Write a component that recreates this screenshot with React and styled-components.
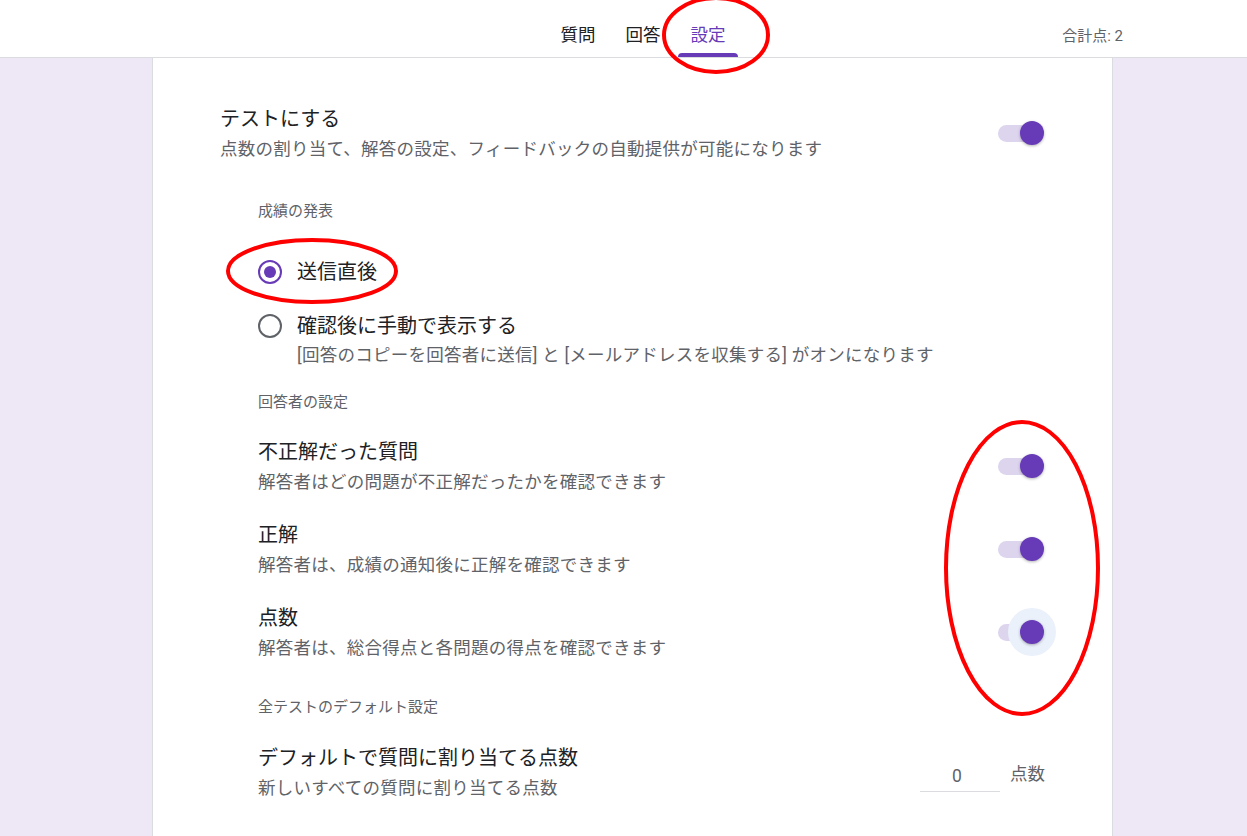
import React from "react";
import styled, { createGlobalStyle } from "styled-components";

const GlobalStyle = createGlobalStyle`
  html, body {
    margin: 0;
    padding: 0;
    overflow: hidden;
  }
  body {
    font-family: Roboto, "Noto Sans CJK JP", "Noto Sans", sans-serif;
    color: #202124;
    background: #ede7f6;
  }
`;

const tabs = [
    {name: '質問'},
    {name: '回答'},
    {name: '設定', active: true},
]

const responderRows = [
    {title: '不正解だった質問', desc: '解答者はどの問題が不正解だったかを確認できます'},
    {title: '正解', desc: '解答者は、成績の通知後に正解を確認できます'},
    {title: '点数', desc: '解答者は、総合得点と各問題の得点を確認できます', focused: true},
]

const Toggle = ({focused}) => (
    <ToggleWrap>
        {focused && <ToggleHalo/>}
        <ToggleTrack/>
        <ToggleThumb/>
    </ToggleWrap>
)

const App = () => {
    return (
        <Page>
            <GlobalStyle/>
            <Header>
                <span/>
                <Tabs>
                    {tabs.map(t => (
                        <Tab key={t.name} $active={t.active}>{t.name}</Tab>
                    ))}
                </Tabs>
                <Total>合計点: 2</Total>
            </Header>
            <Body>
                <Card>
                    <SettingRow>
                        <SettingText>
                            <SettingTitle>テストにする</SettingTitle>
                            <SettingDesc>点数の割り当て、解答の設定、フィードバックの自動提供が可能になります</SettingDesc>
                        </SettingText>
                        <Toggle/>
                    </SettingRow>

                    <Section>
                        <SectionLabel $top={40}>成績の発表</SectionLabel>
                        <RadioGroup>
                            <RadioOption>
                                <RadioBox><RadioCircle $checked/></RadioBox>
                                <div>
                                    <SettingTitle>送信直後</SettingTitle>
                                </div>
                            </RadioOption>
                            <RadioOption>
                                <RadioBox><RadioCircle/></RadioBox>
                                <div>
                                    <SettingTitle>確認後に手動で表示する</SettingTitle>
                                    <RadioHint>[回答のコピーを回答者に送信] と [メールアドレスを収集する] がオンになります</RadioHint>
                                </div>
                            </RadioOption>
                        </RadioGroup>

                        <SectionLabel $top={25}>回答者の設定</SectionLabel>
                        {responderRows.map((r, i) => (
                            <SettingRow key={r.title} $gap={i === 0 ? 26 : 27}>
                                <SettingText>
                                    <SettingTitle>{r.title}</SettingTitle>
                                    <SettingDesc>{r.desc}</SettingDesc>
                                </SettingText>
                                <Toggle focused={r.focused}/>
                            </SettingRow>
                        ))}

                        <SectionLabel $top={37}>全テストのデフォルト設定</SectionLabel>
                        <SettingRow $gap={27}>
                            <SettingText>
                                <SettingTitle>デフォルトで質問に割り当てる点数</SettingTitle>
                                <SettingDesc>新しいすべての質問に割り当てる点数</SettingDesc>
                            </SettingText>
                            <PointsField>
                                <PointsInput>0</PointsInput>
                                <PointsUnit>点数</PointsUnit>
                            </PointsField>
                        </SettingRow>
                    </Section>
                </Card>
            </Body>

            <Annotations width="1247" height="836" viewBox="0 0 1247 836">
                <ellipse cx="716" cy="35" rx="52" ry="37" />
                <ellipse cx="312" cy="271" rx="84" ry="31" />
                <ellipse cx="1022" cy="568" rx="76" ry="146" />
            </Annotations>
        </Page>
    )
}

const Page = styled.div`
  position: relative;
  height: 836px;
  overflow: hidden;
`;

const Header = styled.header`
  display: grid;
  grid-template-columns: 548px auto 1fr;
  align-items: stretch;
  height: 57px;
  background: #ffffff;
  border-bottom: 1px solid #dadce0;
  padding-right: 124px;
`;

const Tabs = styled.nav`
  display: flex;
  gap: 5px;
`;

const Tab = styled.div`
  position: relative;
  display: flex;
  align-items: center;
  padding: 0 12px 8px;
  margin-top: 18px;
  width: 36px;
  justify-content: center;
  font-size: 17.5px;
  color: ${p => p.$active ? '#673ab7' : '#202124'};

  &::after {
    content: '';
    display: ${p => p.$active ? 'block' : 'none'};
    position: absolute;
    left: 0;
    right: 0;
    bottom: 0;
    height: 4px;
    border-radius: 4px 4px 0 0;
    background: #673ab7;
  }
`;

const Total = styled.div`
  justify-self: end;
  align-self: center;
  font-size: 15px;
  color: #5f6368;
  padding-top: 12px;
`;

const Body = styled.main`
  padding-left: 152px;
`;

const Card = styled.section`
  width: 961px;
  min-height: 800px;
  background: #ffffff;
  border-left: 1px solid #dadce0;
  border-right: 1px solid #dadce0;
  padding: 47px 68px 40px 67px;
  box-sizing: border-box;
`;

const SettingRow = styled.div`
  display: flex;
  align-items: center;
  justify-content: space-between;
  margin-top: ${p => p.$gap || 0}px;
`;

const SettingText = styled.div`
  display: flex;
  flex-direction: column;
`;

const SettingTitle = styled.div`
  font-size: 20px;
  line-height: 28px;
  color: #202124;
`;

const SettingDesc = styled.div`
  font-size: 17.5px;
  line-height: 24px;
  margin-top: 4px;
  letter-spacing: 0.25px;
  color: #5f6368;
`;

const Section = styled.div`
  padding-left: 38px;
`;

const SectionLabel = styled.div`
  font-size: 15px;
  line-height: 20px;
  color: #5f6368;
  margin-top: ${p => p.$top}px;
`;

const RadioGroup = styled.div`
  display: flex;
  flex-direction: column;
  gap: 26px;
  padding-top: 37px;
`;

const RadioOption = styled.div`
  display: flex;
  align-items: flex-start;
  gap: 15px;
`;

const RadioBox = styled.div`
  display: flex;
  align-items: center;
  height: 28px;
`;

const RadioCircle = styled.span`
  display: flex;
  align-items: center;
  justify-content: center;
  width: 24px;
  height: 24px;
  box-sizing: border-box;
  border-radius: 50%;
  border: 2.5px solid ${p => p.$checked ? '#673ab7' : '#5f6368'};

  &::after {
    content: '';
    display: ${p => p.$checked ? 'block' : 'none'};
    width: 12px;
    height: 12px;
    border-radius: 50%;
    background: #673ab7;
  }
`;

const RadioHint = styled(SettingDesc)`
  margin-top: 3px;
`;

const ToggleWrap = styled.div`
  position: relative;
  width: 46px;
  height: 26px;
  display: flex;
  align-items: center;
`;

const ToggleTrack = styled.div`
  width: 44px;
  height: 17px;
  border-radius: 9px;
  background: #ddd5ee;
`;

const ToggleThumb = styled.div`
  position: absolute;
  right: 0;
  top: 1px;
  width: 24px;
  height: 24px;
  border-radius: 50%;
  background: #673ab7;
  box-shadow: 0 1px 3px rgba(0, 0, 0, 0.3);
`;

const ToggleHalo = styled.div`
  position: absolute;
  right: -12px;
  top: -11px;
  width: 48px;
  height: 48px;
  border-radius: 50%;
  background: #ebf1fb;
`;

const PointsField = styled.div`
  display: flex;
  align-items: center;
  gap: 10px;
  margin-right: -1px;
`;

const PointsInput = styled.div`
  width: 80px;
  height: 32px;
  margin-top: 8px;
  display: flex;
  align-items: center;
  justify-content: center;
  box-sizing: border-box;
  border-bottom: 1px solid #dadce0;
  font-size: 17.5px;
  color: #5f6368;
  padding-right: 6px;
`;

const PointsUnit = styled.div`
  font-size: 17.5px;
  color: #5f6368;
`;

const Annotations = styled.svg`
  position: absolute;
  top: 0;
  left: 0;
  pointer-events: none;

  ellipse {
    fill: none;
    stroke: #ff0000;
    stroke-width: 4;
  }
`;

export default App;
